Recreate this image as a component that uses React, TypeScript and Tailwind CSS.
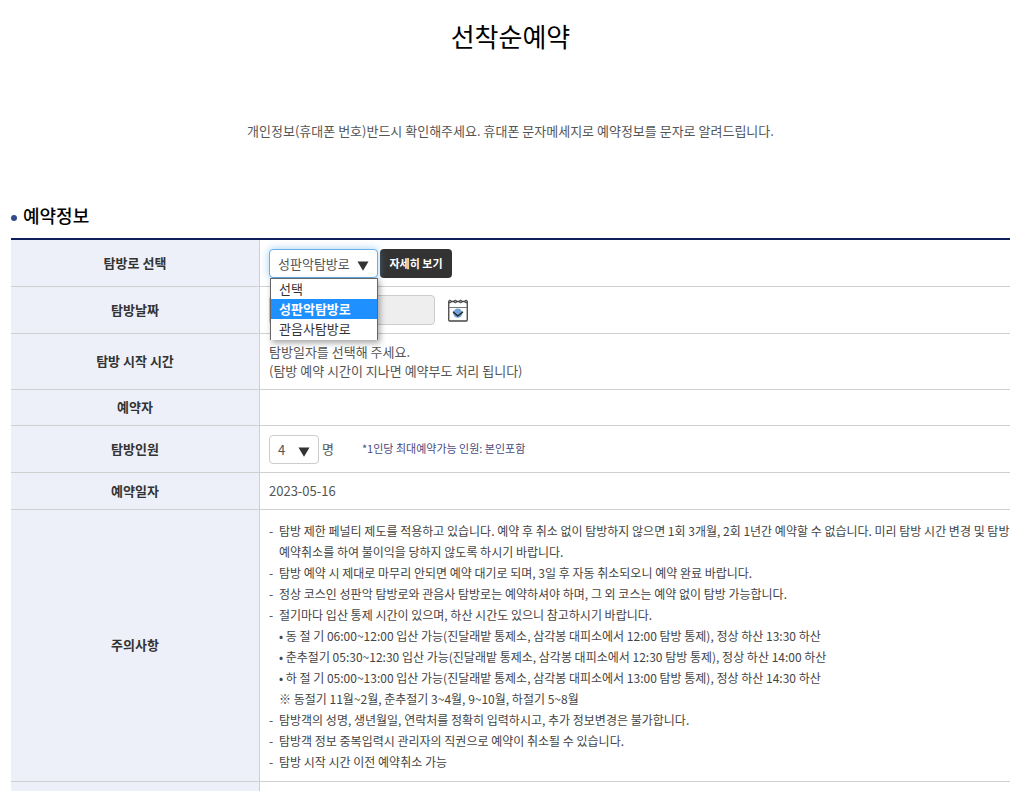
import { useState } from "react";
import type { ReactNode } from "react";

const trails = ["선택", "성판악탐방로", "관음사탐방로"];

const notices: { text: string; details?: string[] }[] = [
  {
    text: "탐방 제한 페널티 제도를 적용하고 있습니다. 예약 후 취소 없이 탐방하지 않으면 1회 3개월, 2회 1년간 예약할 수 없습니다. 미리 탐방 시간 변경 및 탐방 예약취소를 하여 불이익을 당하지 않도록 하시기 바랍니다.",
  },
  { text: "탐방 예약 시 제대로 마무리 안되면 예약 대기로 되며, 3일 후 자동 취소되오니 예약 완료 바랍니다." },
  { text: "정상 코스인 성판악 탐방로와 관음사 탐방로는 예약하셔야 하며, 그 외 코스는 예약 없이 탐방 가능합니다." },
  {
    text: "절기마다 입산 통제 시간이 있으며, 하산 시간도 있으니 참고하시기 바랍니다.",
    details: [
      "• 동 절 기 06:00~12:00 입산 가능(진달래밭 통제소, 삼각봉 대피소에서 12:00 탐방 통제), 정상 하산 13:30 하산",
      "• 춘추절기 05:30~12:30 입산 가능(진달래밭 통제소, 삼각봉 대피소에서 12:30 탐방 통제), 정상 하산 14:00 하산",
      "• 하 절 기 05:00~13:00 입산 가능(진달래밭 통제소, 삼각봉 대피소에서 13:00 탐방 통제), 정상 하산 14:30 하산",
      "※ 동절기 11월~2월, 춘추절기 3~4월, 9~10월, 하절기 5~8월",
    ],
  },
  { text: "탐방객의 성명, 생년월일, 연락처를 정확히 입력하시고, 추가 정보변경은 불가합니다." },
  { text: "탐방객 정보 중복입력시 관리자의 직권으로 예약이 취소될 수 있습니다." },
  { text: "탐방 시작 시간 이전 예약취소 가능" },
];

function Row({ label, height, children }: { label: ReactNode; height: string; children?: ReactNode }) {
  return (
    <tr>
      <th
        scope="row"
        className={`${height} w-[249px] border-r border-b border-[#d0d0d0] bg-[#edf0f8] px-0 pt-0 pb-[2px] text-center align-middle font-bold text-[#333]`}
      >
        {label}
      </th>
      <td className="border-b border-[#d0d0d0] py-0 pr-0 pl-[9px] align-middle">{children}</td>
    </tr>
  );
}

function Arrow({ className }: { className: string }) {
  return (
    <svg viewBox="0 0 12 10" className={`pointer-events-none absolute h-[10px] w-3 fill-[#333] ${className}`} aria-hidden="true">
      <path d="M0.5 0.5h11L6 9.8z" />
    </svg>
  );
}

function CalendarIcon() {
  return (
    <svg viewBox="0 0 20 23" className="h-[23px] w-5" fill="none" aria-hidden="true">
      <rect x="0.75" y="2.5" width="18.5" height="19.5" rx="1" fill="#fff" stroke="#444" strokeWidth="1.3" />
      <path d="M1 8.5h18" stroke="#777" />
      <circle cx="9.8" cy="14.2" r="4.6" fill="#74a3dc" />
      <path d="M5 12.8l4.8 4.2 5.2-4.2" stroke="#222" strokeWidth="1.3" strokeLinejoin="round" />
      <g fill="#999" stroke="#333" strokeWidth="0.9">
        <circle cx="1.9" cy="2.5" r="1.3" />
        <circle cx="7.3" cy="2.5" r="1.3" />
        <circle cx="12.7" cy="2.5" r="1.3" />
        <circle cx="18.1" cy="2.5" r="1.3" />
      </g>
    </svg>
  );
}

export default function App() {
  const [trail, setTrail] = useState("성판악탐방로");
  const [people, setPeople] = useState("4");

  return (
    <main className="bg-white pt-[15px] pr-[10px] pl-[11px] font-['Noto_Sans_CJK_KR',sans-serif] text-[13px] leading-[19px] text-[#555]">
      <h1 className="text-center text-[26px] leading-[42px] text-black">선착순예약</h1>
      <p className="mt-16 text-center">
        개인정보(휴대폰 번호)반드시 확인해주세요. 휴대폰 문자메세지로 예약정보를 문자로 알려드립니다.
      </p>

      <h2 className="mt-[62px] flex h-9 items-start gap-[6px] text-[18px] leading-[26px] font-medium text-black">
        <span className="mt-[13px] size-[6px] rounded-full bg-[#334b8e]" />
        예약정보
      </h2>

      <table className="w-full border-separate border-spacing-0 border-t-2 border-[#0f1f5c]">
        <tbody>
          <Row label={<label htmlFor="trail">탐방로 선택</label>} height="h-[47px]">
            <div className="flex items-center gap-[2px]">
              <div className="relative">
                <select
                  id="trail"
                  value={trail}
                  onChange={(e) => setTrail(e.target.value)}
                  className="block h-[29px] w-[109px] appearance-none rounded-[4px] border border-[#66afe9] bg-white pl-2 text-[13px] text-[#555] shadow-[0_0_8px_rgba(102,175,233,0.6)] outline-none"
                >
                  {trails.map((t) => (
                    <option key={t}>{t}</option>
                  ))}
                </select>
                <Arrow className="top-3 right-[9px]" />
                <ul
                  role="listbox"
                  aria-label="탐방로 선택"
                  className="absolute top-[29px] left-px z-10 w-[108px] border border-b-0 border-[#666] bg-white pb-px text-[13px] leading-5 text-[#333] shadow-[2px_3px_6px_rgba(0,0,0,0.35)]"
                >
                  {trails.map((t) => (
                    <li
                      key={t}
                      role="option"
                      aria-selected={t === trail}
                      onClick={() => setTrail(t)}
                      className={t === trail ? "bg-[#1e90ff] pl-2 font-bold text-white" : "pl-2"}
                    >
                      {t}
                    </li>
                  ))}
                </ul>
              </div>
              <button type="button" className="h-[29px] w-[72px] rounded-[4px] bg-[#333] text-[11px] font-bold text-white">
                자세히 보기
              </button>
            </div>
          </Row>
          <Row label={<label htmlFor="date">탐방날짜</label>} height="h-[47px]">
            <div className="flex items-center gap-[13px]">
              <input id="date" readOnly className="h-[30px] w-[166px] rounded-[4px] border border-[#ccc] bg-[#eee] px-2 outline-none" />
              <button type="button" aria-label="달력">
                <CalendarIcon />
              </button>
            </div>
          </Row>
          <Row label="탐방 시작 시간" height="h-[56px]">
            <p className="pb-[2px]">
              탐방일자를 선택해 주세요.
              <br />
              (탐방 예약 시간이 지나면 예약부도 처리 됩니다)
            </p>
          </Row>
          <Row label="예약자" height="h-[36px]" />
          <Row label={<label htmlFor="people">탐방인원</label>} height="h-[47px]">
            <div className="flex items-center">
              <div className="relative">
                <select
                  id="people"
                  value={people}
                  onChange={(e) => setPeople(e.target.value)}
                  className="block h-[29px] w-[50px] appearance-none rounded-[4px] border border-[#ccc] bg-white pl-2 text-[13px] text-[#555] outline-none"
                >
                  {["1", "2", "3", "4"].map((n) => (
                    <option key={n}>{n}</option>
                  ))}
                </select>
                <Arrow className="top-3 right-[9px]" />
              </div>
              <span className="ml-[3px] pb-[2px]">명</span>
              <span className="ml-7 pb-[2px] text-[11px] text-[#4a4a80]">*1인당 최대예약가능 인원: 본인포함</span>
            </div>
          </Row>
          <Row label="예약일자" height="h-[37px]">
            <p className="pb-[2px]">2023-05-16</p>
          </Row>
          <Row label="주의사항" height="h-[272px]">
            <ul className="text-[12px] leading-[21px] text-[#444]">
              {notices.map((n) => (
                <li key={n.text} className="flex">
                  <span className="w-[10px] shrink-0">-</span>
                  <div>
                    {n.text}
                    {n.details?.map((d) => (
                      <p key={d}>{d}</p>
                    ))}
                  </div>
                </li>
              ))}
            </ul>
          </Row>
          <Row label="" height="h-[47px]" />
        </tbody>
      </table>
    </main>
  );
}
